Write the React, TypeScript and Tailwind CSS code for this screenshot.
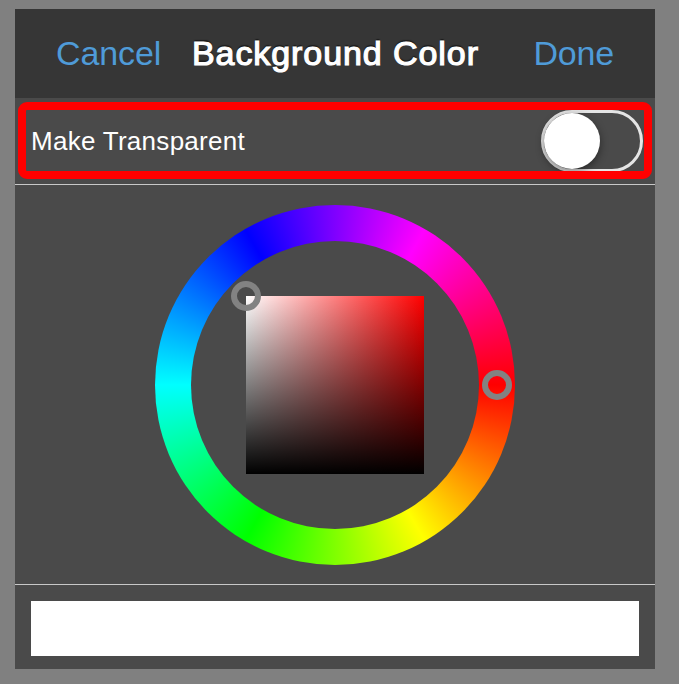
import React, { useState } from 'react';

interface HandleProps {
	className: string;
}

const Handle: React.FC<HandleProps> = ({ className }) => (
	<span
		className={`absolute size-[30px] rounded-full border-[6px] border-[#828282] ${className}`}
	/>
);

const Header: React.FC = () => (
	<header className="flex h-[89px] shrink-0 items-center bg-[#363636] pr-[41px] pb-[2px] pl-[41px] text-[34px] leading-none whitespace-nowrap">
		<button className="w-[136px] text-left tracking-[-0.1px] text-[#4f9bd8]">
			Cancel
		</button>
		<h1 className="tracking-[0.92px] text-white [-webkit-text-stroke:1.2px_white] [text-shadow:0_-2px_1px_rgba(0,0,0,0.5)]">
			Background Color
		</h1>
		<button className="ml-auto tracking-[-0.2px] text-[#4f9bd8]">Done</button>
	</header>
);

interface TransparentRowProps {
	checked: boolean;
	onToggle: () => void;
}

const TransparentRow: React.FC<TransparentRowProps> = ({
	checked,
	onToggle,
}) => (
	<div className="relative flex h-[87px] shrink-0 items-center justify-between border-b border-[#c8c8c8] pr-3 pl-4">
		<span className="text-[26px] leading-none tracking-[0.28px] text-white">
			Make Transparent
		</span>
		<button
			role="switch"
			aria-checked={checked}
			aria-label="Make Transparent"
			onClick={onToggle}
			className={`mb-px flex h-[62px] w-[102px] items-center rounded-full border-[3px] border-[#e5e5e5] ${checked ? 'justify-end' : 'justify-start'}`}
		>
			<span className="size-14 rounded-full bg-white shadow-[0_3px_8px_rgba(0,0,0,0.45)]" />
		</button>
		<div className="pointer-events-none absolute top-1 right-[3px] left-[3px] h-[77px] rounded-[9px] border-8 border-[#ff0000]" />
	</div>
);

const ColorWheel: React.FC = () => (
	<div className="relative flex size-[360px] items-center justify-center rounded-full bg-[conic-gradient(from_90deg,#f00,#ff0,#0f0,#0ff,#00f,#f0f,#f00)]">
		<div className="flex size-72 items-center justify-center rounded-full bg-[#4a4a4a]">
			<div className="relative size-[178px] bg-[linear-gradient(to_top,#000,transparent),linear-gradient(to_right,#fff,#f00)]">
				<Handle className="-top-[15px] -left-[15px]" />
			</div>
		</div>
		<Handle className="top-[165px] right-[3px]" />
	</div>
);

const App: React.FC = () => {
	const [transparent, setTransparent] = useState(false);

	return (
		<div className="h-[684px] w-[679px] overflow-hidden bg-[#808080] pt-[9px] pl-[15px] font-['Liberation_Sans',Arial,sans-serif]">
			<div className="flex h-[660px] w-[640px] flex-col bg-[#4a4a4a]">
				<Header />
				<TransparentRow
					checked={transparent}
					onToggle={() => setTransparent(!transparent)}
				/>
				<div className="flex h-[400px] shrink-0 items-center justify-center border-b border-[#c8c8c8]">
					<ColorWheel />
				</div>
				<div className="px-4 pt-4">
					<div className="h-[55px] bg-white" />
				</div>
			</div>
		</div>
	);
};

export default App;
